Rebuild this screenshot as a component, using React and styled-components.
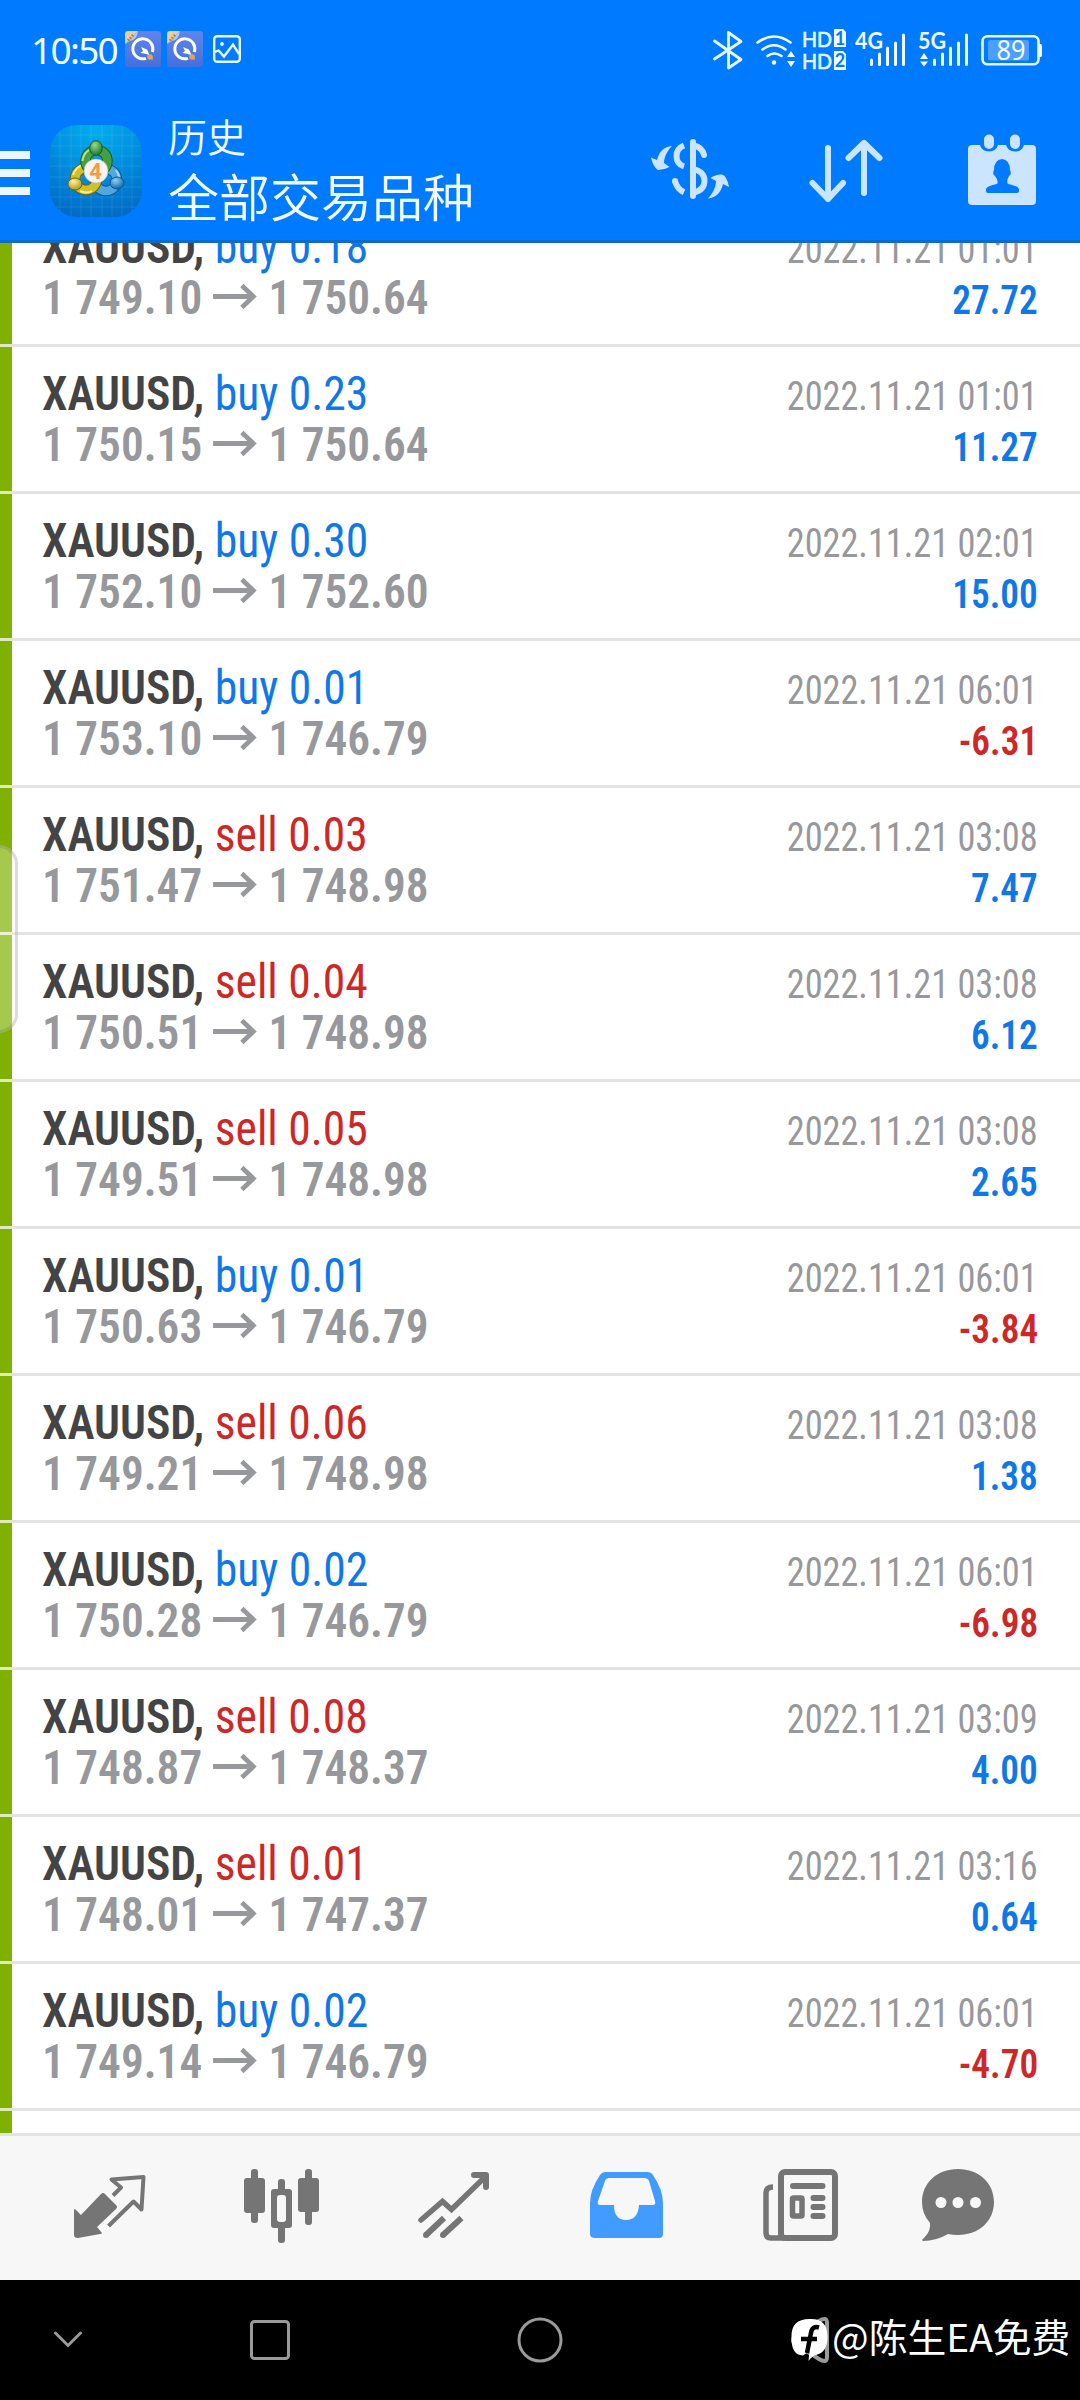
import React from 'react'
import styled, { createGlobalStyle } from 'styled-components';

const GlobalStyle = createGlobalStyle`
  * {
    box-sizing: border-box;
  }
  body {
    margin: 0;
    background: #fff;
    font-family: Roboto, "Noto Sans CJK SC", sans-serif;
  }
  svg {
    display: block;
    flex: none;
    overflow: visible;
  }
`;

const Screen = styled.div`
  position: relative;
  width: 1080px;
  height: 2400px;
  display: flex;
  flex-direction: column;
  overflow: hidden;
`;

const Header = styled.header`
  flex: none;
  height: 243px;
  background: #007aff;
  border-bottom: 3px solid #0f6bc8;
  color: #f2fbff;
`;

const StatusBar = styled.div`
  height: 98px;
  padding: 0 38px 0 31px;
  display: flex;
  align-items: center;
  justify-content: space-between;
`;

const StatusLeft = styled.div`
  display: flex;
  align-items: center;
`;

const Clock = styled.div`
  width: 94px;
  font-family: "Noto Sans", sans-serif;
  font-size: 37px;
  line-height: 40px;
  letter-spacing: -1.7px;
  padding-top: 2px;
`;

const NoticeIcons = styled.div`
  display: flex;
  align-items: center;
  gap: 6px;

  svg:last-child {
    margin-left: 4px;
  }
`;

const Toolbar = styled.div`
  height: 142px;
  display: flex;
  align-items: flex-start;
`;

const MenuButton = styled.div`
  width: 30px;
  margin: 53px 20px 0 0;
  display: flex;
  flex-direction: column;
  gap: 10px;
`;

const MenuLine = styled.div`
  height: 8px;
  background: #ecf6ff;
`;

const LogoBox = styled.div`
  margin-top: 27px;
`;

const Titles = styled.div`
  margin: 13px 0 0 26px;
  flex: 1;
  font-weight: 350;
  font-family: "Noto Sans CJK SC", sans-serif;
`;

const Title = styled.div`
  font-size: 39px;
  line-height: 48px;
`;

const Subtitle = styled.div`
  font-size: 51px;
  line-height: 72px;
`;

const ToolbarActions = styled.div`
  display: flex;
  gap: 80px;
  padding: 36px 44px 0 0;

  svg:last-child {
    margin-left: 5px;
  }
`;

const List = styled.main`
  flex: 1;
  min-height: 0;
  overflow: hidden;
`;

const Deals = styled.div`
  margin-top: -43px;
`;

const Row = styled.div`
  height: 144px;
  border-left: 12px solid #80b000;
  padding: 21px 42px 0 30px;
`;

const Separator = styled.div`
  height: 3px;
  background: linear-gradient(to right, #dfebbf 12px, #e3e3e3 12px);
`;

const Line = styled.div`
  height: 51px;
  line-height: 51px;
  display: flex;
  justify-content: space-between;
  align-items: baseline;
  white-space: pre;
  font-stretch: 75%;
`;

const Symbol = styled.div`
  font-size: 48px;
  font-weight: 600;
  color: #444;
  transform: scaleX(0.95);
  transform-origin: left;
`;

const Side = styled.span`
  font-weight: 400;
  color: ${({ $sell }) => ($sell ? '#ce2727' : '#0f78e8')};
`;

const Prices = styled.div`
  display: flex;
  align-items: baseline;
  font-size: 48px;
  font-weight: 650;
  color: #97989c;
  transform: scaleX(0.945);
  transform-origin: left;
`;

const PriceArrow = styled.svg`
  margin: 0 12px 0 11px;
`;

const Time = styled.div`
  font-size: 40px;
  color: #97989c;
  transform: scaleX(0.907);
  transform-origin: right;
`;

const Profit = styled.div`
  font-size: 40px;
  font-weight: 650;
  color: ${({ $loss }) => ($loss ? '#ce2727' : '#0f78e8')};
  transform: scaleX(0.932);
  transform-origin: right;
`;

const EdgeHandle = styled.div`
  position: absolute;
  left: -20px;
  top: 845px;
  width: 38px;
  height: 188px;
  border: 3px solid rgba(110, 110, 110, 0.25);
  border-radius: 22px;
  background: rgba(255, 255, 255, 0.3);
`;

const TabBar = styled.nav`
  flex: none;
  height: 147px;
  padding: 0 24px;
  display: flex;
  align-items: center;
  background: #f7f7f7;
  border-top: 3px solid #e3e3e3;
`;

const Tab = styled.div`
  flex: 1;
  display: flex;
  justify-content: center;
  color: ${({ $active }) => ($active ? '#429bff' : '#757575')};
`;

const SystemNav = styled.div`
  flex: none;
  position: relative;
  height: 120px;
  padding: 0 246px 0 46px;
  display: flex;
  align-items: center;
  background: #000;
`;

const NavKey = styled.svg`
  margin-right: ${({ $gap }) => $gap}px;
`;

const Watermark = styled.div`
  position: absolute;
  left: 791px;
  top: 30px;
  height: 60px;
  display: flex;
  align-items: center;
  gap: 3px;
  color: #fff;
`;

const WatermarkText = styled.div`
  margin-top: -10px;
  font-family: "Noto Sans CJK SC", sans-serif;
  font-size: 38.8px;
  line-height: 60px;
  white-space: nowrap;
`;

const VipIcon = () => (
  <svg width="36" height="36" viewBox="0 0 36 36">
    <defs>
      <linearGradient id="vip" x1="0" y1="0" x2="0" y2="1">
        <stop offset="0" stopColor="#5f86ea" />
        <stop offset="1" stopColor="#4470dd" />
      </linearGradient>
    </defs>
    <rect width="36" height="36" rx="3" fill="url(#vip)" />
    <path d="M3 0H13L0 13V3Q0 0 3 0Z" fill="#e6cf9f" />
    <path d="M13 0Q12 9 5 10L0 13Z" fill="#b9c6ea" />
    <path d="M2.500 8L4.500 10M4.500 6L6.500 8M6.500 3.500L8.500 5.500" stroke="#a9762a" strokeWidth="1.200" />
    <path d="M21 27.300A10 10 0 1 1 27.300 21" fill="none" stroke="#fff" strokeWidth="3" />
    <path d="M16 16L22 18.500L24.500 24L19 22.500L15.500 22L18 20Z" fill="#fff" />
    <circle cx="25" cy="26" r="2.800" fill="#e3a552" />
    <path d="M24 27L28 29L27 25Z" fill="#e3a552" />
  </svg>
);

const PictureIcon = () => (
  <svg width="28" height="28" viewBox="0 0 28 28" fill="none" stroke="#e6f7ff" strokeWidth="2.400">
    <rect x="1.200" y="1.200" width="25.600" height="25.600" rx="3" />
    <circle cx="9" cy="9" r="1.900" fill="#e6f7ff" stroke="none" />
    <path d="M2 17L5.500 15.500L11 21.500L20 9.500L26 19" />
  </svg>
);

const bars = [7, 13, 19, 24, 32];

const Signal = ({ x }) => (
  <g stroke="#f2fbff" strokeWidth="3" strokeLinecap="round">
    {bars.map((h, i) => (
      <path key={h} d={`M${x + i * 8} ${45 - h + 1}V43.500`} />
    ))}
  </g>
);

// Right half of the status bar
const StatusIcons = () => (
  <svg width="332" height="56" viewBox="0 0 332 56" fontFamily="Lato, sans-serif">
    <path d="M4.500 20L31 38.500L18.500 47V11.500L31 20.500L4.500 38" fill="none" stroke="#e6f7ff" strokeWidth="2.800" strokeLinejoin="round" strokeLinecap="round" />
    <g fill="none" stroke="#f2fbff" strokeWidth="2.600" strokeLinecap="round">
      <path d="M47.500 21.500Q64 9.500 80.500 21.500" />
      <path d="M52.500 28.500Q64 20 75.500 28.500" />
      <path d="M57.500 35Q64 30 71.500 35" />
    </g>
    <circle cx="64" cy="41.500" r="2.200" fill="#f2fbff" />
    <path d="M77 36L81 30L85 36ZM77 40L81 46L85 40Z" fill="#f2fbff" />
    <g fill="#e6f7ff" stroke="#e6f7ff" strokeWidth="0.700" fontSize="22">
      <text x="92" y="26" textLength="30" lengthAdjust="spacingAndGlyphs">HD</text>
      <text x="92" y="48" textLength="30" lengthAdjust="spacingAndGlyphs">HD</text>
    </g>
    <path d="M124 8H133L136 11V26H124ZM124 30H133L136 33V49H124Z" fill="#f2fbff" />
    <g fill="#007aff" fontSize="18" fontWeight="700" textAnchor="middle">
      <text x="130" y="23.500">1</text>
      <text x="130" y="45.500">2</text>
    </g>
    <g fill="#f2fbff" fontSize="23" fontWeight="700">
      <text x="145" y="28" textLength="28" lengthAdjust="spacingAndGlyphs">4G</text>
      <text x="208" y="28" textLength="28" lengthAdjust="spacingAndGlyphs">5G</text>
    </g>
    <Signal x={161.500} />
    <Signal x={224.500} />
    <path d="M210 38L214 32L218 38ZM210 40.500L214 45.500L218 40.500Z" fill="#f2fbff" />
    <rect x="272.500" y="15.200" width="56" height="28" rx="5" fill="none" stroke="#e6f7ff" strokeWidth="2.600" />
    <rect x="278" y="19" width="41" height="20.500" rx="2" fill="#4b9fff" />
    <path d="M329 23H330.500Q332 23 332 24.500V34.500Q332 36 330.500 36H329Z" fill="#f2fbff" />
    <text x="286.500" y="39" fill="#f2fbff" fontFamily="Noto Sans" fontSize="27" textLength="29" lengthAdjust="spacingAndGlyphs">89</text>
  </svg>
);

const AppLogo = () => (
  <svg width="92" height="92" viewBox="0 0 92 92">
    <defs>
      <radialGradient id="logoBg" cx="0.5" cy="0" r="1">
        <stop offset="0" stopColor="#00b0ee" />
        <stop offset="0.500" stopColor="#008fe0" />
        <stop offset="1" stopColor="#006cc6" />
      </radialGradient>
      <radialGradient id="green" cx="0.4" cy="0.3" r="0.7">
        <stop offset="0" stopColor="#9bd68a" />
        <stop offset="1" stopColor="#1f7c2c" />
      </radialGradient>
      <radialGradient id="yellow" cx="0.4" cy="0.3" r="0.7">
        <stop offset="0" stopColor="#fff2a0" />
        <stop offset="1" stopColor="#b39a12" />
      </radialGradient>
      <radialGradient id="blue" cx="0.4" cy="0.3" r="0.7">
        <stop offset="0" stopColor="#8fd0f5" />
        <stop offset="1" stopColor="#1266ad" />
      </radialGradient>
    </defs>
    <rect width="92" height="92" rx="27" fill="url(#logoBg)" />
    <path d="M10 6V86M21 1V91M31 0V92M41 0V92M52 0V92M62 0V92M72 1V91M82 6V86M6 10H86M1 21H91M0 31H92M0 41H92M0 52H92M0 62H92M1 72H91M6 82H86" stroke="#fff" strokeOpacity="0.120" strokeWidth="0.800" />
    <g fill="none">
      <circle cx="56" cy="55" r="11" stroke="#14558f" strokeWidth="10.500" />
      <circle cx="56" cy="55" r="11" stroke="#4fa9e0" strokeWidth="8.500" />
      <path d="M66 45Q72 53 67 61" stroke="#a5dcf7" strokeWidth="2" />
      <circle cx="36" cy="54" r="11" stroke="#6d6712" strokeWidth="10.500" />
      <circle cx="36" cy="54" r="11" stroke="#d0c02c" strokeWidth="8.500" />
      <path d="M23 50Q26 41 34 40M30 66Q37 69 42 66" stroke="#f6ee8c" strokeWidth="2" />
      <circle cx="46.500" cy="36" r="11" stroke="#14601f" strokeWidth="10.500" />
      <circle cx="46.500" cy="36" r="11" stroke="#46a03f" strokeWidth="8.500" />
      <path d="M32.500 36Q33 29 39 25" stroke="#b5e3a2" strokeWidth="2" />
    </g>
    <ellipse cx="46" cy="23" rx="6.300" ry="7.300" fill="url(#green)" stroke="#14601f" />
    <ellipse cx="25" cy="59" rx="7" ry="6" fill="url(#yellow)" stroke="#6d6712" />
    <ellipse cx="67" cy="58" rx="7" ry="6" fill="url(#blue)" stroke="#14558f" />
    <circle cx="46" cy="46" r="12" fill="#f7f3f0" stroke="#b9b7ae" strokeWidth="0.700" />
    <text x="45.500" y="54" fontFamily="Roboto, sans-serif" fontSize="22" fontWeight="700" fill="#f39a4b" textAnchor="middle">4</text>
  </svg>
);

const CurrencyIcon = () => (
  <svg width="78" height="72" viewBox="0 0 78 72" fill="none" stroke="#cbe4ff" strokeWidth="6" strokeLinecap="round">
    <path d="M42 8V62" />
    <path d="M33 11.500Q25.500 14.500 25.500 22Q25.500 30 33 32.500" strokeLinecap="butt" />
    <path d="M43 11.500Q51 13 53 21" />
    <path d="M42 34.500Q53.500 38 53.500 46.500Q53.500 56 43 58.500" strokeLinecap="butt" />
    <path d="M24 47Q26 55 33 58.200" strokeLinecap="butt" />
    <circle cx="24" cy="47" r="3" fill="#cbe4ff" stroke="none" />
    <path d="M21 12C14 19 13 26 13 29L18.500 33Q13 36 7 36Q2 33 0 23.500L6 26Q9 13 21 12Z" fill="#cbe4ff" stroke="none" />
    <path d="M57 64.500C64 57 65 50 65 47L59.500 44Q65 40 71 40.500Q76 42 78 53L72 50Q69 63 57 64.500Z" fill="#cbe4ff" stroke="none" />
  </svg>
);

const SortIcon = () => (
  <svg width="74" height="72" viewBox="0 0 74 72" fill="none" stroke="#cbe4ff" strokeWidth="6" strokeLinecap="round" strokeLinejoin="round">
    <path d="M19 14V65M3.500 49L19 65L34 49" />
    <path d="M55 59V9M39.500 24L55 9L70.500 24" />
  </svg>
);

const CalendarIcon = () => (
  <svg width="68" height="72" viewBox="0 0 68 72">
    <path d="M4 11H12Q14 17.500 21 17.500Q28 17.500 30 11H38Q40 17.500 47 17.500Q54 17.500 56 11H64Q68 11 68 15V67Q68 71 64 71H4Q0 71 0 67V15Q0 11 4 11Z" fill="#cbe4ff" />
    <rect x="16" y="0.500" width="10" height="14.500" rx="5" fill="#cbe4ff" />
    <rect x="42" y="0.500" width="10" height="14.500" rx="5" fill="#cbe4ff" />
    <path d="M34 25Q42 26 42 36Q44 40 41 42Q38 47 40 50Q50 52 51 55V57Q51 59 48 59H20Q18 59 18 57V55Q19 52 29 50Q31 47 27 42Q24 40 26 36Q26 26 34 25Z" fill="#007aff" />
  </svg>
);

const Arrow = () => (
  <PriceArrow width="47" height="28" viewBox="0 0 47 28" fill="none" stroke="#97989c" strokeWidth="5">
    <path d="M0 10.500H43" />
    <path d="M30.500 -0.500L42.500 10.500L30.500 21.500" />
  </PriceArrow>
);

const TradeIcon = () => (
  <svg width="96" height="96" viewBox="0 0 96 96">
    <path d="M12 50.500Q12 48 14 50L19 55L39 34Q41 32 43 34L54 45Q56 47 54 49L35 67L40 73Q40 74 38 74L16 78Q12 78 12 75Z" fill="currentColor" />
    <path d="M51 35.500L59 27.500L49.500 19.500L81.500 17L79.500 49.500L71.500 41.500L46.500 66" fill="none" stroke="currentColor" strokeWidth="4" strokeLinejoin="round" />
  </svg>
);

const CandlesIcon = () => (
  <svg width="96" height="96" viewBox="0 0 96 96" fill="currentColor">
    <rect x="17" y="9" width="7" height="54" rx="3" />
    <rect x="10" y="18" width="21" height="35" rx="3" />
    <rect x="71" y="9" width="7" height="56" rx="3" />
    <rect x="64" y="18" width="21" height="34" rx="3" />
    <rect x="44" y="19" width="7" height="15" rx="3" />
    <rect x="44" y="62" width="7" height="21" rx="3" />
    <path fillRule="evenodd" d="M40 29H55Q58 29 58 32V65Q58 68 55 68H40Q37 68 37 65V32Q37 29 40 29ZM46 35Q43 35 43 38V59Q43 62 46 62H49Q52 62 52 59V38Q52 35 49 35Z" />
  </svg>
);

const TrendIcon = () => (
  <svg width="96" height="96" viewBox="0 0 96 96" fill="none" stroke="currentColor" strokeWidth="6" strokeLinecap="round">
    <path d="M15 60L36.500 41.500L45.500 49.500L79 17" strokeWidth="5.500" />
    <path d="M68 15H80V27" strokeLinejoin="round" />
    <path d="M20 75L38 58" strokeLinecap="butt" />
    <path d="M37 75L55.500 58" strokeLinecap="butt" />
    <path d="M20 75H20.100M37 75H37.100" />
  </svg>
);

const InboxIcon = () => (
  <svg width="96" height="96" viewBox="0 0 96 96" fill="currentColor">
    <path fillRule="evenodd" d="M27 12H69Q73 12 75 15Q85 30 85 43V74Q85 78 81 78H17Q12 78 12 74V43Q12 30 22 15Q24 12 27 12ZM31 18Q28 18 27 21L20 41Q19 45 22 45H36Q36 60 48 60Q60 60 61 45H75Q78 45 77 41L71 21Q70 18 66 18Z" />
  </svg>
);

const NewsIcon = () => (
  <svg width="96" height="96" viewBox="0 0 96 96" fill="none" stroke="currentColor" strokeWidth="6">
    <rect x="31" y="12" width="54" height="66" rx="4" />
    <path d="M23 27Q16 27 16 33V73Q16 78 21 78H34" strokeWidth="5.500" />
    <path d="M43 26H72.500M63.500 38H72.500M63.500 47H72.500M63.500 56H72.500" strokeLinecap="round" />
    <rect x="42.500" y="38" width="9.500" height="18" rx="1" strokeWidth="5.500" />
  </svg>
);

const ChatIcon = () => (
  <svg width="96" height="96" viewBox="0 0 96 96">
    <path d="M36 9C57 9 72 23 72 42C72 61 57 75 36 75Q30 75 26 74Q14 81 1 81Q-1 80 2 78Q9 71 8 63Q0 54 0 42C0 23 15 9 36 9Z" fill="currentColor" />
    <circle cx="19" cy="42.500" r="5.500" fill="#f7f7f7" />
    <circle cx="36" cy="42.500" r="5.500" fill="#f7f7f7" />
    <circle cx="53.500" cy="42.500" r="5.500" fill="#f7f7f7" />
  </svg>
);

const KuaiIcon = () => (
  <svg width="38" height="44" viewBox="0 0 38 44">
    <path d="M18.500 1Q36 0 36.500 18Q37 34 25 37Q21 38 17.500 43L18.500 33L12 37.500Q0 37 0.500 19Q0 1 18.500 1Z" fill="#fff" />
    <path d="M28 9.500Q21 7.500 20 15L16 35M10 21H26" fill="none" stroke="#000" strokeWidth="4.500" />
  </svg>
);

const deals = [
  { side: 'buy', lots: '0.18', open: '1 749.10', close: '1 750.64', time: '2022.11.21 01:01', profit: '27.72' },
  { side: 'buy', lots: '0.23', open: '1 750.15', close: '1 750.64', time: '2022.11.21 01:01', profit: '11.27' },
  { side: 'buy', lots: '0.30', open: '1 752.10', close: '1 752.60', time: '2022.11.21 02:01', profit: '15.00' },
  { side: 'buy', lots: '0.01', open: '1 753.10', close: '1 746.79', time: '2022.11.21 06:01', profit: '-6.31' },
  { side: 'sell', lots: '0.03', open: '1 751.47', close: '1 748.98', time: '2022.11.21 03:08', profit: '7.47' },
  { side: 'sell', lots: '0.04', open: '1 750.51', close: '1 748.98', time: '2022.11.21 03:08', profit: '6.12' },
  { side: 'sell', lots: '0.05', open: '1 749.51', close: '1 748.98', time: '2022.11.21 03:08', profit: '2.65' },
  { side: 'buy', lots: '0.01', open: '1 750.63', close: '1 746.79', time: '2022.11.21 06:01', profit: '-3.84' },
  { side: 'sell', lots: '0.06', open: '1 749.21', close: '1 748.98', time: '2022.11.21 03:08', profit: '1.38' },
  { side: 'buy', lots: '0.02', open: '1 750.28', close: '1 746.79', time: '2022.11.21 06:01', profit: '-6.98' },
  { side: 'sell', lots: '0.08', open: '1 748.87', close: '1 748.37', time: '2022.11.21 03:09', profit: '4.00' },
  { side: 'sell', lots: '0.01', open: '1 748.01', close: '1 747.37', time: '2022.11.21 03:16', profit: '0.64' },
  { side: 'buy', lots: '0.02', open: '1 749.14', close: '1 746.79', time: '2022.11.21 06:01', profit: '-4.70' },
];

const tabs = [TradeIcon, CandlesIcon, TrendIcon, InboxIcon, NewsIcon, ChatIcon];

const DealRow = ({ deal }) => (
  <>
    <Row>
      <Line>
        <Symbol>XAUUSD, <Side $sell={deal.side === 'sell'}>{deal.side} {deal.lots}</Side></Symbol>
        <Time>{deal.time}</Time>
      </Line>
      <Line>
        <Prices>
          <span>{deal.open}</span>
          <Arrow />
          <span>{deal.close}</span>
        </Prices>
        <Profit $loss={deal.profit.startsWith('-')}>{deal.profit}</Profit>
      </Line>
    </Row>
    <Separator />
  </>
);

const App = () => {
  return (
    <Screen>
      <GlobalStyle />
      <Header>
        <StatusBar>
          <StatusLeft>
            <Clock>10:50</Clock>
            <NoticeIcons>
              <VipIcon />
              <VipIcon />
              <PictureIcon />
            </NoticeIcons>
          </StatusLeft>
          <StatusIcons />
        </StatusBar>
        <Toolbar>
          <MenuButton>
            <MenuLine />
            <MenuLine />
            <MenuLine />
          </MenuButton>
          <LogoBox><AppLogo /></LogoBox>
          <Titles>
            <Title>历史</Title>
            <Subtitle>全部交易品种</Subtitle>
          </Titles>
          <ToolbarActions>
            <CurrencyIcon />
            <SortIcon />
            <CalendarIcon />
          </ToolbarActions>
        </Toolbar>
      </Header>
      <List>
        <Deals>
          {deals.map((deal, i) => <DealRow key={i} deal={deal} />)}
          <Row />
        </Deals>
      </List>
      <TabBar>
        {tabs.map((Icon, i) => (
          <Tab key={i} $active={Icon === InboxIcon}><Icon /></Tab>
        ))}
      </TabBar>
      <SystemNav>
        <NavKey $gap={158} width="44" height="44" viewBox="0 0 44 44" fill="none" stroke="#9a9a9a" strokeWidth="3" strokeLinecap="round">
          <path d="M9.500 15L22 27.500L34.500 15" />
        </NavKey>
        <NavKey $gap={224} width="44" height="44" viewBox="0 0 44 44" fill="none" stroke="#9a9a9a" strokeWidth="3">
          <rect x="3.500" y="3.500" width="37" height="37" rx="3" />
        </NavKey>
        <NavKey $gap={228} width="48" height="48" viewBox="0 0 48 48" fill="none" stroke="#9a9a9a" strokeWidth="3">
          <circle cx="24" cy="24" r="21" />
        </NavKey>
        <NavKey $gap={0} width="44" height="48" viewBox="0 0 44 48" fill="none" stroke="#9a9a9a" strokeWidth="4">
          <path d="M3 20Q-1 24 3 28L27 43Q35 48 35 41V7Q35 0 27 5Z" />
        </NavKey>
        <Watermark>
          <KuaiIcon />
          <WatermarkText>@陈生EA免费</WatermarkText>
        </Watermark>
      </SystemNav>
      <EdgeHandle />
    </Screen>
  )
}

export default App
